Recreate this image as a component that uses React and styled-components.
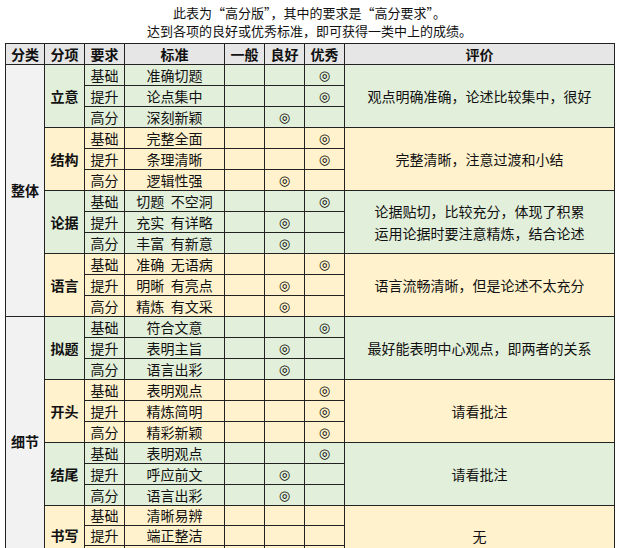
import React from 'react';
import styled, { createGlobalStyle } from 'styled-components';

const Global = createGlobalStyle`
  body { margin: 0; background: #fff; font-family: "Noto Sans CJK SC", "Noto Sans", sans-serif; }
`;

const Page = styled.div`
  width: 618px;
  padding: 4px 4px 0 5px;
  box-sizing: border-box;
`;

const Title = styled.div`
  text-align: center;
  font-size: 13px;
  line-height: 18px;
  height: 18px;
  overflow: hidden;
  color: #111;
`;

const Table = styled.table`
  border-collapse: collapse;
  table-layout: fixed;
  width: 610px;
  margin-top: 3px;
  font-size: 14px;
  color: #111;
`;

const Col = styled.col`
  width: ${p => (p.$w ? `${p.$w}px` : 'auto')};
`;

const Th = styled.th`
  background: #e7e6e6;
  border: 1px solid #222;
  height: 20px;
  padding: 0;
  font-weight: 700;
  line-height: 19px;
`;

const Td = styled.td`
  border: 1px solid #222;
  height: 19px;
  padding: 0;
  text-align: center;
  line-height: ${p => (p.$note ? '22px' : '19px')};
  background: ${p => (p.$bg === 'cat' ? '#f2f2f2' : p.$bg === 'y' ? '#fff2cc' : '#e2efda')};
  font-weight: ${p => (p.$bold ? 700 : 400)};
  white-space: ${p => (p.$note ? 'pre-line' : 'pre')};
`;

const Mark = styled.span`
  font-family: "DejaVu Sans", sans-serif;
  font-size: 13px;
  color: #000;
`;

const groups = [
  { cat: '整体', name: '立意', items: [['准确切题', 3], ['论点集中', 3], ['深刻新颖', 2]], note: '观点明确准确，论述比较集中，很好' },
  { name: '结构', items: [['完整全面', 3], ['条理清晰', 3], ['逻辑性强', 2]], note: '完整清晰，注意过渡和小结' },
  { name: '论据', items: [['切题  不空洞', 3], ['充实  有详略', 2], ['丰富  有新意', 2]], note: '论据贴切，比较充分，体现了积累\n运用论据时要注意精炼，结合论述' },
  { name: '语言', items: [['准确  无语病', 3], ['明晰  有亮点', 2], ['精炼  有文采', 2]], note: '语言流畅清晰，但是论述不太充分' },
  { cat: '细节', name: '拟题', items: [['符合文意', 3], ['表明主旨', 2], ['语言出彩', 2]], note: '最好能表明中心观点，即两者的关系' },
  { name: '开头', items: [['表明观点', 3], ['精炼简明', 3], ['精彩新颖', 3]], note: '请看批注' },
  { name: '结尾', items: [['表明观点', 3], ['呼应前文', 2], ['语言出彩', 2]], note: '请看批注' },
  { name: '书写', items: [['清晰易辨', 0], ['端正整洁', 0], ['美观大方', 0]], note: '无' },
];

const levels = ['基础', '提升', '高分'];
const widths = [39, 40, 40, 100, 40, 40, 40, 0];

export default function App() {
  return (
    <Page>
      <Global />
      <Title>此表为“高分版”，其中的要求是“高分要求”。</Title>
      <Title>达到各项的良好或优秀标准，即可获得一类中上的成绩。</Title>
      <Table>
        <colgroup>
          {widths.map((w, i) => <Col key={i} $w={w} />)}
        </colgroup>
        <thead>
          <tr>
            {['分类', '分项', '要求', '标准', '一般', '良好', '优秀', '评价'].map(h => <Th key={h}>{h}</Th>)}
          </tr>
        </thead>
        <tbody>
          {groups.map((g, gi) => {
            const bg = gi % 2 ? 'y' : 'g';
            return g.items.map(([std, r], i) => (
              <tr key={g.name + i}>
                {i === 0 && g.cat && <Td rowSpan={12} $bg="cat" $bold>{g.cat}</Td>}
                {i === 0 && <Td rowSpan={3} $bg={bg} $bold>{g.name}</Td>}
                <Td $bg={bg}>{levels[i]}</Td>
                <Td $bg={bg}>{std}</Td>
                {[1, 2, 3].map(k => <Td key={k} $bg={bg}>{r === k ? <Mark>◎</Mark> : ''}</Td>)}
                {i === 0 && <Td rowSpan={3} $bg={bg} $note>{g.note}</Td>}
              </tr>
            ));
          })}
        </tbody>
      </Table>
    </Page>
  );
}
